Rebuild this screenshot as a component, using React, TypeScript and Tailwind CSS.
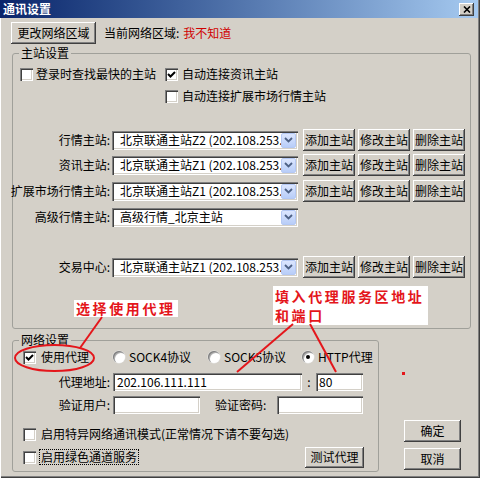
import React from 'react';

const font = "font-['Noto_Sans_CJK_SC','Noto_Sans',sans-serif]";
const raised =
  'bg-[#d4d0c8] shadow-[inset_-1px_-1px_#404040,inset_1px_1px_#ffffff,inset_-2px_-2px_#808080]';
const sunken =
  'bg-white shadow-[inset_1px_1px_#808080,inset_2px_2px_#404040,inset_-1px_-1px_#ffffff,inset_-2px_-2px_#d4d0c8]';

function Btn({ children, className }: { children: React.ReactNode; className: string }) {
  return (
    <div className={`flex items-center justify-center whitespace-nowrap text-[12px] leading-[14px] text-black ${raised} ${className}`}>
      {children}
    </div>
  );
}

function Check({ checked = false }: { checked?: boolean }) {
  return (
    <div className={`flex h-[13px] w-[13px] shrink-0 items-center justify-center ${sunken}`}>
      {checked && (
        <svg width="9" height="9" viewBox="0 0 9 9">
          <path d="M1 4 L3.5 6.5 L8 2" fill="none" stroke="#000" strokeWidth="2" />
        </svg>
      )}
    </div>
  );
}

function Radio({ checked = false }: { checked?: boolean }) {
  return (
    <div className="flex h-[12px] w-[12px] shrink-0 items-center justify-center rounded-full bg-white shadow-[inset_1px_1px_#808080,inset_2px_2px_#b0b0b0,0_0_0_0.5px_#e8e8e8]">
      {checked && <div className="h-[4px] w-[4px] rounded-full bg-black" />}
    </div>
  );
}

function Combo({ text }: { text: string }) {
  return (
    <div className={`flex h-[19px] w-[186px] items-center pl-[8px] pr-[2px] ${sunken}`}>
      <span className="min-w-0 flex-1 overflow-hidden whitespace-nowrap text-[12px] leading-[14px]">{text}</span>
      <div className="flex h-[15px] w-[15px] shrink-0 items-center justify-center rounded-[2px] border border-[#b4c8f4] bg-gradient-to-b from-[#dce6fe] to-[#b8cdf8]">
        <svg width="9" height="6" viewBox="0 0 9 6">
          <path d="M1 1 L4.5 4.5 L8 1" fill="none" stroke="#4d6185" strokeWidth="1.8" />
        </svg>
      </div>
    </div>
  );
}

function StationRow({ label, text, buttons = true, className }: { label: string; text: string; buttons?: boolean; className: string }) {
  return (
    <div className={`flex h-[22px] items-center ${className}`}>
      <div className="flex w-[97px] shrink-0 justify-end whitespace-nowrap text-[12px] leading-[14px]">{label}</div>
      <div className="ml-[2px]">
        <Combo text={text} />
      </div>
      {buttons && (
        <div className="ml-[5px] flex gap-[3px]">
          <Btn className="h-[22px] w-[52px]">添加主站</Btn>
          <Btn className="h-[22px] w-[52px]">修改主站</Btn>
          <Btn className="h-[22px] w-[52px]">删除主站</Btn>
        </div>
      )}
    </div>
  );
}

export default function App() {
  return (
    <div className={`relative flex h-[478px] w-[480px] flex-col bg-[#d4d0c8] text-black ${font} shadow-[inset_1px_0_#ffffff,inset_-1px_-1px_#404040,inset_-2px_-2px_#808080]`}>
      {/* title bar */}
      <div className="mr-[2px] flex h-[18px] shrink-0 items-center justify-between bg-gradient-to-r from-[#0a246a] to-[#a6caf0] pl-[3px] pr-[4px]">
        <span className="text-[12px] font-bold leading-[14px] text-white">通讯设置</span>
        <div className={`flex h-[13px] w-[15px] items-center justify-center ${raised}`}>
          <svg width="8" height="7" viewBox="0 0 8 7">
            <path d="M1 0.5 L7 6.5 M7 0.5 L1 6.5" stroke="#000" strokeWidth="1.6" />
          </svg>
        </div>
      </div>

      {/* region */}
      <div className="mt-[4px] flex h-[22px] items-center pl-[11px]">
        <Btn className="h-[22px] w-[85px]">更改网络区域</Btn>
        <span className="ml-[8px] text-[12px] leading-[14px]">当前网络区域:</span>
        <span className="ml-[4px] text-[12px] leading-[14px] text-[#d00000]">我不知道</span>
      </div>

      {/* main station group */}
      <div className="ml-[12px] mt-[9px] h-[276px] w-[459px] rounded-[3px] border border-[#a0a09a]">
        <div className="-mt-[8px] ml-[6px] w-fit bg-[#d4d0c8] px-[2px] text-[12px] leading-[14px]">主站设置</div>
        <div className="mt-[3px] flex h-[22px] items-center pl-[7px] text-[12px] leading-[14px]">
          <div className="flex w-[145px] items-center gap-[3px]">
            <Check />
            <span>登录时查找最快的主站</span>
          </div>
          <div className="flex items-center gap-[4px]">
            <Check checked />
            <span>自动连接资讯主站</span>
          </div>
        </div>
        <div className="flex h-[22px] items-center pl-[152px] text-[12px] leading-[14px]">
          <div className="flex items-center gap-[4px]">
            <Check />
            <span>自动连接扩展市场行情主站</span>
          </div>
        </div>
        <StationRow className="mt-[22px]" label="行情主站:" text="北京联通主站Z2 (202.108.253.13:7709)" />
        <StationRow className="mt-[3px]" label="资讯主站:" text="北京联通主站Z1 (202.108.253.12:7709)" />
        <StationRow className="mt-[4px]" label="扩展市场行情主站:" text="北京联通主站Z1 (202.108.253.150:7727)" />
        <StationRow className="mt-[4px]" label="高级行情主站:" text="高级行情_北京主站" buttons={false} />
        <StationRow className="mt-[28px]" label="交易中心:" text="北京联通主站Z1 (202.108.253.13:7708)" />
      </div>

      {/* bottom part */}
      <div className="mt-[11px] flex items-end">
        <div className="ml-[12px] h-[132px] w-[367px] rounded-[3px] border border-[#a0a09a] text-[12px] leading-[14px]">
          <div className="-mt-[8px] ml-[6px] w-fit bg-[#d4d0c8] px-[2px]">网络设置</div>
          <div className="flex h-[20px] items-center pl-[10px]">
            <div className="flex w-[90px] items-center gap-[5px]">
              <Check checked />
              <span>使用代理</span>
            </div>
            <div className="flex w-[95px] items-center gap-[4px]">
              <Radio />
              <span>SOCK4协议</span>
            </div>
            <div className="flex w-[94px] items-center gap-[4px]">
              <Radio />
              <span>SOCK5协议</span>
            </div>
            <div className="flex items-center gap-[4px]">
              <Radio checked />
              <span>HTTP代理</span>
            </div>
          </div>
          <div className="mt-[6px] flex h-[18px] items-center">
            <div className="w-[97px] text-right">代理地址:</div>
            <div className={`ml-[3px] flex h-[18px] w-[189px] items-center pl-[4px] ${sunken}`}>202.106.111.111</div>
            <div className="w-[14px] text-center">:</div>
            <div className={`flex h-[18px] w-[47px] items-center pl-[3px] ${sunken}`}>80</div>
          </div>
          <div className="mt-[5px] flex h-[18px] items-center">
            <div className="w-[97px] text-right">验证用户:</div>
            <div className={`ml-[3px] h-[18px] w-[87px] ${sunken}`} />
            <div className="ml-[15px] w-[60px]">验证密码:</div>
            <div className={`ml-[2px] h-[18px] w-[86px] ${sunken}`} />
          </div>
          <div className="mt-[10px] flex h-[20px] items-center gap-[5px] pl-[10px]">
            <Check />
            <span>启用特异网络通讯模式(正常情况下请不要勾选)</span>
          </div>
          <div className="mt-[2px] flex h-[22px] items-center pl-[10px]">
            <Check />
            <span className="ml-[3px] border border-dotted border-black px-[1px]">启用绿色通道服务</span>
            <Btn className="ml-auto mr-[14px] h-[21px] w-[59px]">测试代理</Btn>
          </div>
        </div>
        <div className="mb-[2px] ml-[25px] flex flex-col gap-[6px]">
          <Btn className="h-[22px] w-[57px]">确定</Btn>
          <Btn className="h-[22px] w-[57px]">取消</Btn>
        </div>
      </div>

      {/* annotations */}
      <div className="absolute left-[74px] top-[300px] whitespace-nowrap bg-white px-[2px] text-[14px] font-bold leading-[17px] tracking-[2.6px] text-[#e4161b]">
        选择使用代理
      </div>
      <div className="absolute left-[273px] top-[286px] w-[155px] whitespace-nowrap bg-white pl-[2px] pt-[1px] text-[14px] font-bold leading-[19px] tracking-[2.6px] text-[#e4161b]">
        填入代理服务区地址
        <br />
        和端口
      </div>
      <svg className="pointer-events-none absolute left-0 top-0" width="480" height="478">
        <ellipse cx="54.5" cy="358" rx="39.5" ry="13" fill="none" stroke="#e4161b" strokeWidth="2" />
        <line x1="102" y1="317" x2="80" y2="348" stroke="#e4161b" strokeWidth="2" />
        <line x1="293" y1="324" x2="237" y2="372" stroke="#e4161b" strokeWidth="2" />
        <line x1="310" y1="324" x2="336" y2="372" stroke="#e4161b" strokeWidth="2" />
        <rect x="402" y="372" width="3" height="3" fill="#e4161b" />
      </svg>
    </div>
  );
}
